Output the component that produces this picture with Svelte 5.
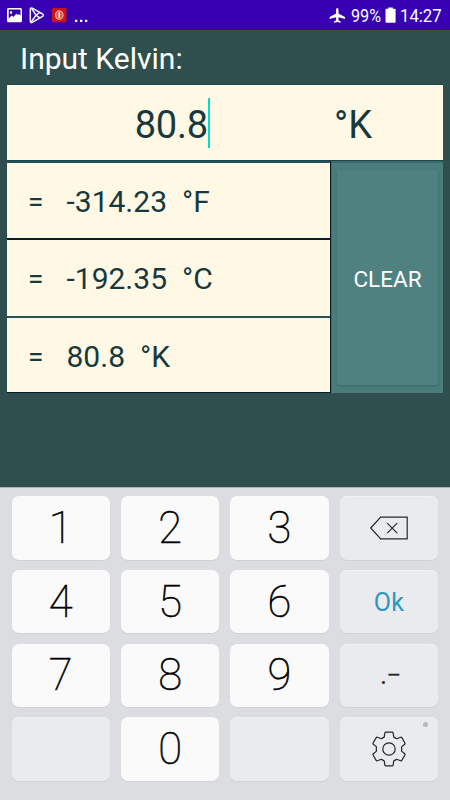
<script>
  const results = [
    { value: '-314.23', unit: '°F' },
    { value: '-192.35', unit: '°C' },
    { value: '80.8', unit: '°K' }
  ];
  const keys = ['1', '2', '3', 'back', '4', '5', '6', 'ok', '7', '8', '9', 'sign', '', '0', '', 'settings'];
</script>

<div class="screen">
  <header class="status">
    <svg class="notices" width="92" height="30" viewBox="0 0 92 30">
      <path fill="#fff" fill-rule="evenodd" d="M8.500 8h12a1.500 1.500 0 0 1 1.500 1.500v11.200a1.500 1.500 0 0 1-1.500 1.500h-12A1.500 1.500 0 0 1 7 20.700V9.500A1.500 1.500 0 0 1 8.500 8ZM8.700 9.600v9l3-3.100 1.600 1.500 3-3.300 1.500 1.200 1-1 1.700 1.700v-6ZM11 11.200a1.300 1.300 0 1 1 0 2.600 1.300 1.300 0 0 1 0-2.600Z" />
      <g fill="none" stroke="#eef0ff" stroke-width="1.500" stroke-linejoin="round" stroke-linecap="round">
        <path d="M30.300 9.500Q30.300 7.200 32.300 8.200L42.500 14Q44.300 15.200 42.500 16.400L32.300 22.400Q30.300 23.300 30.300 21Z" />
        <path d="M32 9 36 15.200 39.800 17.800M31.200 22 36 15.200 39.800 12.500" />
      </g>
      <rect x="52" y="8" width="14.500" height="14.200" rx="1.300" fill="#c9141d" />
      <ellipse cx="59.300" cy="15.100" rx="3.700" ry="4.200" fill="#d9544f" stroke="#f0a6a3" stroke-width="1.300" />
      <path d="M59.300 12.300v5.500" fill="none" stroke="#fff" stroke-width="1.500" />
      <path d="M75 19.800h2.300v2.300H75zM80 19.800h2.300v2.300H80zM85 19.800h2.300v2.300H85z" fill="#fff" />
    </svg>
    <div class="system">
      <svg width="17" height="30" viewBox="0 0 17 30">
        <path fill="#fff" d="M8.300 8q1.200 0 1.200 1.600v3.800l6.500 3.700v1.800l-6.500-1.700v3l2.200 1.400v1.200l-3.400-.8-3.400.8v-1.200l2.200-1.400v-3L.6 18.900v-1.800l6.500-3.700V9.600Q7.100 8 8.300 8Z" />
      </svg>
      <span class="percent">99%</span>
      <svg class="battery" width="12" height="30" viewBox="0 0 12 30">
        <path fill="#fff" d="M3.300 7.500h4.500v1.200h2q.8 0 .8.900v12.200q0 .9-.8.900H1.300q-.8 0-.8-.9V9.600q0-.9.800-.9h2Z" />
      </svg>
      <span class="time">14:27</span>
    </div>
  </header>

  <main>
    <h1>Input Kelvin:</h1>
    <div class="panel">
      <div class="entry">
        <span class="number">80.8</span><i class="caret"></i>
        <span class="entry-unit">°K</span>
      </div>
      <div class="lower">
        <div class="results">
          {#each results as row}
            <div class="result">
              <span class="equals">=</span>
              <span>{row.value}</span>
              <span class="unit">{row.unit}</span>
            </div>
          {/each}
        </div>
        <div class="action"><button class="clear">CLEAR</button></div>
      </div>
    </div>
  </main>

  <section class="keyboard">
    {#each keys as key, i}
      <button class="key" class:muted={i % 4 === 3 || key === ''} class:ok={key === 'ok'} aria-label={key || 'blank'}>
        {#if key === 'back'}
          <svg width="40" height="26" viewBox="0 0 40 26" fill="none" stroke="#292929" stroke-width="1.200">
            <path d="M1.700 13 11.700 2.200h26.500v21.600H11.700Z" />
            <path d="m18.200 8.200 10 10M28.200 8.200l-10 10" />
          </svg>
        {:else if key === 'ok'}
          <span>Ok</span>
        {:else if key === 'sign'}
          <span class="sign"><span class="dot">.</span><span class="dash">-</span></span>
        {:else if key === 'settings'}
          <svg width="36" height="36" viewBox="0 0 36 36" fill="none" stroke="#252525" stroke-width="1.200" stroke-linejoin="round">
            <path d="M14.800 1.100h6.400q.8 0 .9.800l.7 4.200q1.500.6 2.800 1.600l4-1.500q.8-.3 1.200.4l3.100 5.400q.4.700-.2 1.200l-3.200 2.700q.2 1.100.2 2.100t-.2 2.100l3.200 2.700q.6.500.2 1.200l-3.100 5.400q-.4.700-1.200.4l-4-1.500q-1.300 1-2.800 1.600l-.7 4.200q-.1.800-.9.800h-6.400q-.8 0-.9-.8l-.7-4.200q-1.500-.6-2.800-1.600l-4 1.500q-.8.300-1.200-.4L2.100 24q-.4-.7.200-1.200l3.200-2.700q-.2-1.100-.2-2.100t.2-2.100l-3.200-2.700q-.6-.5-.2-1.200l3.100-5.400q.4-.7 1.200-.4l4 1.500q1.300-1 2.800-1.600l.7-4.200q.1-.8.900-.8Z" />
            <circle cx="18" cy="18" r="6.200" />
          </svg>
          <i class="hint"></i>
        {:else}
          {key}
        {/if}
      </button>
    {/each}
  </section>
</div>

<style>
  .screen {
    width: 450px;
    height: 800px;
    overflow: hidden;
    display: flex;
    flex-direction: column;
    background: #2f4f4f;
    font-family: Roboto, sans-serif;
    color: #17393d;
  }
  * { box-sizing: border-box; }
  svg { display: block; flex: none; }
  button { border: 0; padding: 0; margin: 0; font-family: inherit; }
  .status {
    height: 30px;
    flex: none;
    display: flex;
    justify-content: space-between;
    background: #3700b3;
    color: #fff;
  }
  .system { display: flex; width: 121px; font-size: 19px; line-height: 32px; }
  .percent, .time { display: block; transform-origin: left center; white-space: nowrap; }
  .percent { width: 34px; margin-left: 5px; transform: scaleX(.85); }
  .battery { margin-left: 0; }
  .time { width: 42px; margin-left: 3px; transform: scaleX(.88); }
  main { height: 457px; flex: none; padding: 0 7px; }
  h1 {
    height: 54px;
    margin: 0;
    padding-left: 13px;
    color: #fff;
    font-size: 30px;
    line-height: 57px;
    font-weight: 400;
  }
  .panel { width: 436px; }
  .entry {
    height: 77px;
    display: flex;
    background: #fff8e5;
    border: 1px solid #1b4749;
    border-width: 1px 0 1px 0;
    font-size: 38px;
    line-height: 80px;
  }
  .number { width: 201px; text-align: right; letter-spacing: -.2px; }
  .caret { width: 2px; height: 50px; margin-top: 13px; background: #00dfc5; }
  .entry-unit { margin-left: 124px; }
  .lower { display: flex; height: 232px; }
  .results {
    width: 324px;
    display: flex;
    flex-direction: column;
    border-right: 1px solid #071e25;
  }
  .result {
    height: 77.300px;
    display: flex;
    align-items: center;
    padding: 2px 0 0 21px;
    border-top: 2px solid #245156;
    border-bottom: 0 solid;
    background: #fff8e5;
    font-size: 30px;
    white-space: pre;
  }
  .result:nth-child(2) { border-top-color: #081c2b; }
  .result:last-child { border-bottom: 1px solid #081c2b; padding-top: 4px; }
  .equals { width: 38.500px; font-size: 28px; }
  .unit { margin-left: 15px; }
  .action { flex: 1; padding: 7px 5px 8px; background: #4c7d7d; border-top: 2px solid #3a6a6b; border-left: 1px solid #3a6a6b; }
  .clear {
    width: 100%;
    height: 100%;
    padding-top: 2px;
    border-radius: 2px;
    background: #4f8181;
    box-shadow: 0 1px 3px #315f6399;
    color: #fff;
    font-size: 22.500px;
  }
  .keyboard {
    height: 313px;
    flex: none;
    display: grid;
    grid-template-columns: repeat(4, 98.300px);
    grid-template-rows: repeat(4, 63.300px);
    gap: 10.400px 11.100px;
    padding: 8.400px 0 0 11.600px;
    background: #dcdde1;
    border-top: 1px solid #a5b6b8;
  }
  .key {
    position: relative;
    display: flex;
    align-items: center;
    justify-content: center;
    padding-top: 2px;
    border-radius: 7px;
    background: #fafafa;
    box-shadow: 0 1px 0 #cfd1d4;
    color: #000;
    font-size: 43.500px;
    font-weight: 100;
    -webkit-text-stroke: .6px #000;
    line-height: 62px;
  }
  .muted { padding-top: 0; background: #e9ebef; box-shadow: 0 1px 0 #cfd1d4, inset 0 1px 0 #f0f1f4; -webkit-text-stroke: 0; }
  .ok { color: #2b99bd; font-size: 25px; font-weight: 400; letter-spacing: .3px; padding-top: 2px; }
  .sign { display: flex; color: #252525; font-size: 27px; font-weight: 400; }
  .dash { font-weight: 300; -webkit-text-stroke: .5px #252525; transform: scaleX(1.600); margin: -1px 0 0 3px; }
  .hint {
    position: absolute;
    top: 5px;
    right: 10px;
    width: 5px;
    height: 5px;
    border-radius: 50%;
    background: #b8b9bb;
  }
</style>
